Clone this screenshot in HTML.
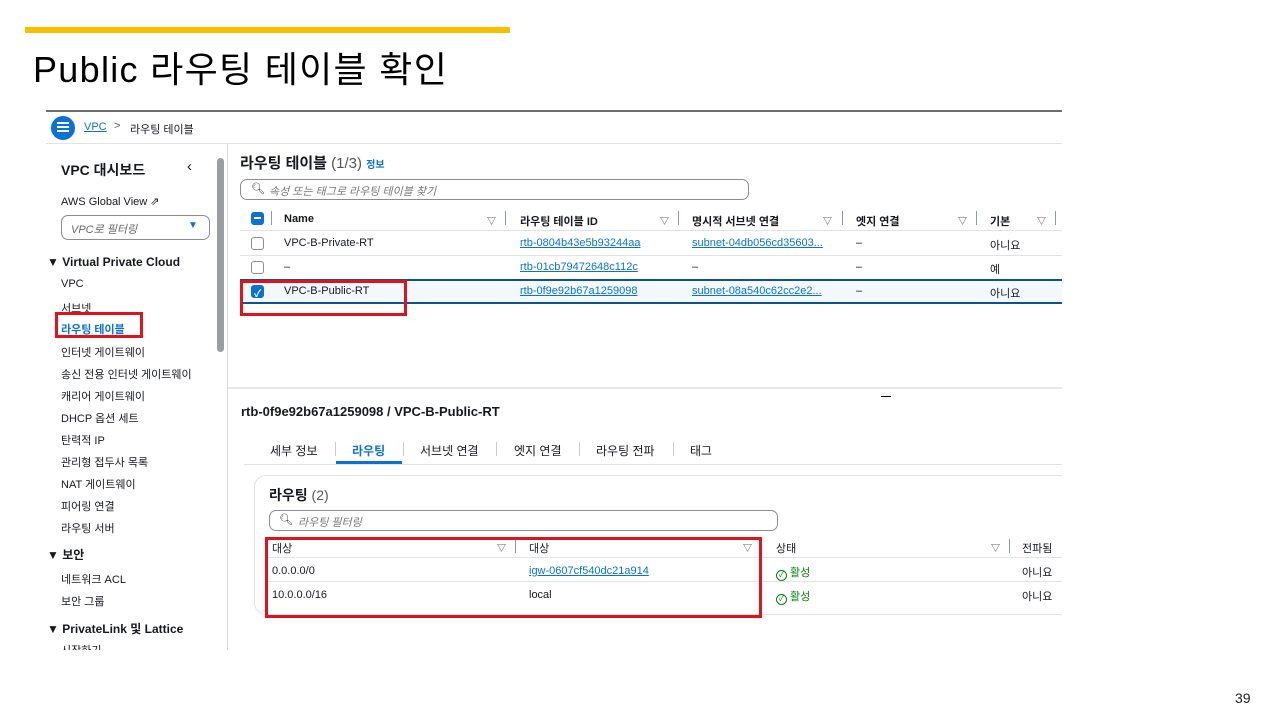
<!DOCTYPE html>
<html><head><meta charset="utf-8"><style>
*{margin:0;padding:0;box-sizing:border-box}
body{width:1280px;height:720px;background:#fff;position:relative;overflow:hidden;font-family:"Liberation Sans","Noto Sans CJK KR",sans-serif;color:#16191f}
.a{position:absolute;white-space:nowrap}
.s{font-size:11px}
.lk{color:#0972d3;text-decoration:underline}
.hl{position:absolute;height:1px;background:#e0e2e6}
.cb{position:absolute;width:13px;height:13px;border:1.5px solid #8c8c94;border-radius:3px;background:#fff}
.cbon{background:#0972d3;border-color:#0972d3}
.red{position:absolute;border:3px solid #e0121b}
.tri{font-size:9px;color:#333}
.sep{position:absolute;width:1px;height:14px;background:#8d99a8}
.ok{display:inline-block;width:11px;height:11px;border:1.5px solid #037f0c;border-radius:50%;font-size:8px;line-height:8px;text-align:center;vertical-align:-1px;margin-right:3px}
</style></head><body>
<div class="a" style="left:25px;top:27px;width:485px;height:6px;background:#f6c000"></div>
<div class="a" style="left:33px;top:41px;font-size:36px;color:#000;letter-spacing:1.3px">Public 라우팅 테이블 확인</div>
<div class="a" style="left:1235px;top:690px;font-size:14px;color:#222">39</div>

<div class="a" style="left:46px;top:110px;width:1016px;height:2px;background:#6e6e6e"></div>
<div class="a" style="left:51px;top:116px;width:24px;height:24px;border-radius:50%;background:#0972d3"></div>
<div class="a" style="left:57px;top:122px;width:12px;height:2px;background:#fff;box-shadow:0 4px #fff,0 8px #fff"></div>
<div class="a s lk" style="left:84px;top:121px">VPC</div>
<div class="a s" style="left:114px;top:120px;color:#555">&gt;</div>
<div class="a s" style="left:130px;top:121px">라우팅 테이블</div>
<div class="hl" style="left:46px;top:143px;width:1016px"></div>

<div class="a" style="left:227px;top:144px;width:1px;height:506px;background:#d5d9de"></div>
<div class="a" style="left:217px;top:158px;width:7px;height:194px;border-radius:4px;background:#9a9ea3"></div>
<div class="a" style="left:61px;top:160px;font-size:14px;font-weight:bold">VPC 대시보드</div>
<div class="a" style="left:187px;top:158px;font-size:15px">‹</div>
<div class="a s" style="left:61px;top:195px">AWS Global View ⇗</div>
<div class="a" style="left:61px;top:215px;width:149px;height:25px;border:1px solid #8c8c94;border-radius:7px"></div>
<div class="a s" style="left:71px;top:221px;font-style:italic;color:#666">VPC로 필터링</div>
<div class="a" style="left:188px;top:220px;font-size:10px;color:#0972d3">▼</div>
<div class="a" style="left:47px;top:255px;font-size:12px;font-weight:bold">▼ Virtual Private Cloud</div>
<div class="a s" style="left:61px;top:278px">VPC</div>
<div class="a s" style="left:61px;top:300px">서브넷</div>
<div class="a s" style="left:61px;top:321px;color:#0972d3;font-weight:bold">라우팅 테이블</div>
<div class="red" style="left:55px;top:312px;width:88px;height:26px"></div>
<div class="a s" style="left:61px;top:344px">인터넷 게이트웨이</div>
<div class="a s" style="left:61px;top:366px">송신 전용 인터넷 게이트웨이</div>
<div class="a s" style="left:61px;top:388px">캐리어 게이트웨이</div>
<div class="a s" style="left:61px;top:410px">DHCP 옵션 세트</div>
<div class="a s" style="left:61px;top:432px">탄력적 IP</div>
<div class="a s" style="left:61px;top:454px">관리형 접두사 목록</div>
<div class="a s" style="left:61px;top:476px">NAT 게이트웨이</div>
<div class="a s" style="left:61px;top:498px">피어링 연결</div>
<div class="a s" style="left:61px;top:520px">라우팅 서버</div>
<div class="a" style="left:47px;top:546px;font-size:12px;font-weight:bold">▼ 보안</div>
<div class="a s" style="left:61px;top:571px">네트워크 ACL</div>
<div class="a s" style="left:61px;top:593px">보안 그룹</div>
<div class="a" style="left:47px;top:620px;font-size:12px;font-weight:bold">▼ PrivateLink 및 Lattice</div>
<div class="a s" style="left:61px;top:642px;height:8px;overflow:hidden">시작하기</div>

<div class="a" style="left:240px;top:152px;font-size:15px;font-weight:bold">라우팅 테이블 <span style="font-weight:normal;color:#555">(1/3)</span> <span style="font-size:10px;color:#0972d3">정보</span></div>
<div class="a" style="left:240px;top:179px;width:509px;height:21px;border:1px solid #8c8c94;border-radius:7px"></div>
<div class="a s" style="left:251px;top:182px;color:#333">🔍︎</div>
<div class="a s" style="left:269px;top:183px;font-style:italic;color:#777">속성 또는 태그로 라우팅 테이블 찾기</div>

<div class="cb cbon" style="left:251px;top:212px"></div>
<div class="a" style="left:254px;top:217px;width:7px;height:2px;background:#fff"></div>
<div class="sep" style="left:271px;top:211px"></div>
<div class="a s" style="left:284px;top:213px;font-weight:bold">Name</div>
<div class="a tri" style="left:487px;top:214px">▽</div><div class="sep" style="left:505px;top:211px"></div>
<div class="a s" style="left:520px;top:213px;font-weight:bold">라우팅 테이블 ID</div>
<div class="a tri" style="left:660px;top:214px">▽</div><div class="sep" style="left:678px;top:211px"></div>
<div class="a s" style="left:692px;top:213px;font-weight:bold">명시적 서브넷 연결</div>
<div class="a tri" style="left:823px;top:214px">▽</div><div class="sep" style="left:842px;top:211px"></div>
<div class="a s" style="left:856px;top:213px;font-weight:bold">엣지 연결</div>
<div class="a tri" style="left:958px;top:214px">▽</div><div class="sep" style="left:976px;top:211px"></div>
<div class="a s" style="left:990px;top:213px;font-weight:bold">기본</div>
<div class="a tri" style="left:1037px;top:214px">▽</div><div class="sep" style="left:1055px;top:211px"></div>
<div class="hl" style="left:240px;top:230px;width:822px"></div>

<div class="cb" style="left:251px;top:237px"></div>
<div class="a s" style="left:284px;top:237px">VPC-B-Private-RT</div>
<div class="a s lk" style="left:520px;top:237px">rtb-0804b43e5b93244aa</div>
<div class="a s lk" style="left:692px;top:237px">subnet-04db056cd35603...</div>
<div class="a s" style="left:856px;top:237px">–</div>
<div class="a s" style="left:990px;top:237px">아니요</div>
<div class="hl" style="left:240px;top:255px;width:822px"></div>
<div class="cb" style="left:251px;top:261px"></div>
<div class="a s" style="left:284px;top:261px">–</div>
<div class="a s lk" style="left:520px;top:261px">rtb-01cb79472648c112c</div>
<div class="a s" style="left:692px;top:261px">–</div>
<div class="a s" style="left:856px;top:261px">–</div>
<div class="a s" style="left:990px;top:261px">예</div>
<div class="a" style="left:240px;top:279px;width:822px;height:25px;background:#f2f8fd;border-top:2px solid #0b5394;border-bottom:2px solid #0b5394"></div>
<div class="cb cbon" style="left:251px;top:285px"></div>
<div class="a" style="left:254px;top:285px;font-size:10px;color:#fff;font-weight:bold">✓</div>
<div class="a s" style="left:284px;top:285px">VPC-B-Public-RT</div>
<div class="a s lk" style="left:520px;top:285px">rtb-0f9e92b67a1259098</div>
<div class="a s lk" style="left:692px;top:285px">subnet-08a540c62cc2e2...</div>
<div class="a s" style="left:856px;top:285px">–</div>
<div class="a s" style="left:990px;top:285px">아니요</div>
<div class="red" style="left:240px;top:280px;width:167px;height:36px"></div>

<div class="a" style="left:228px;top:387px;width:834px;height:2px;background:#e6e8eb"></div>
<div class="a" style="left:881px;top:396px;width:10px;height:1px;background:#000"></div>
<div class="a" style="left:241px;top:404px;font-size:13px;font-weight:bold">rtb-0f9e92b67a1259098 / VPC-B-Public-RT</div>
<div class="a" style="left:270px;top:442px;font-size:12px">세부 정보</div>
<div class="sep" style="left:335px;top:442px;background:#ccc"></div>
<div class="a" style="left:352px;top:442px;font-size:12px;color:#0972d3;font-weight:bold">라우팅</div>
<div class="a" style="left:336px;top:461px;width:66px;height:3px;background:#0972d3"></div>
<div class="sep" style="left:403px;top:442px;background:#ccc"></div>
<div class="a" style="left:420px;top:442px;font-size:12px">서브넷 연결</div>
<div class="sep" style="left:496px;top:442px;background:#ccc"></div>
<div class="a" style="left:514px;top:442px;font-size:12px">엣지 연결</div>
<div class="sep" style="left:579px;top:442px;background:#ccc"></div>
<div class="a" style="left:596px;top:442px;font-size:12px">라우팅 전파</div>
<div class="sep" style="left:673px;top:442px;background:#ccc"></div>
<div class="a" style="left:690px;top:442px;font-size:12px">태그</div>
<div class="hl" style="left:244px;top:464px;width:818px"></div>

<div class="a" style="left:254px;top:475px;width:840px;height:140px;border:1px solid #e0e2e6;border-radius:12px"></div>
<div class="a" style="left:269px;top:485px;font-size:14px;font-weight:bold">라우팅 <span style="font-weight:normal;color:#555">(2)</span></div>
<div class="a" style="left:269px;top:510px;width:509px;height:21px;border:1px solid #8c8c94;border-radius:7px"></div>
<div class="a s" style="left:279px;top:513px;color:#333">🔍︎</div>
<div class="a s" style="left:298px;top:514px;font-style:italic;color:#777">라우팅 필터링</div>
<div class="a s" style="left:272px;top:540px">대상</div>
<div class="a tri" style="left:497px;top:541px">▽</div><div class="sep" style="left:515px;top:539px"></div>
<div class="a s" style="left:529px;top:540px">대상</div>
<div class="a tri" style="left:743px;top:541px">▽</div>
<div class="a s" style="left:776px;top:540px">상태</div>
<div class="a tri" style="left:991px;top:541px">▽</div><div class="sep" style="left:1009px;top:539px"></div>
<div class="a s" style="left:1022px;top:540px">전파됨</div>
<div class="hl" style="left:268px;top:557px;width:794px"></div>
<div class="a s" style="left:272px;top:565px">0.0.0.0/0</div>
<div class="a s lk" style="left:529px;top:565px">igw-0607cf540dc21a914</div>
<div class="a s" style="left:776px;top:564px;color:#037f0c"><span class="ok">✓</span>활성</div>
<div class="a s" style="left:1022px;top:564px">아니요</div>
<div class="hl" style="left:268px;top:581px;width:794px"></div>
<div class="a s" style="left:272px;top:589px">10.0.0.0/16</div>
<div class="a s" style="left:529px;top:589px">local</div>
<div class="a s" style="left:776px;top:588px;color:#037f0c"><span class="ok">✓</span>활성</div>
<div class="a s" style="left:1022px;top:588px">아니요</div>
<div class="red" style="left:265px;top:537px;width:497px;height:81px"></div>
<div class="a" style="left:1062px;top:100px;width:218px;height:560px;background:#fff"></div>
</body></html>
